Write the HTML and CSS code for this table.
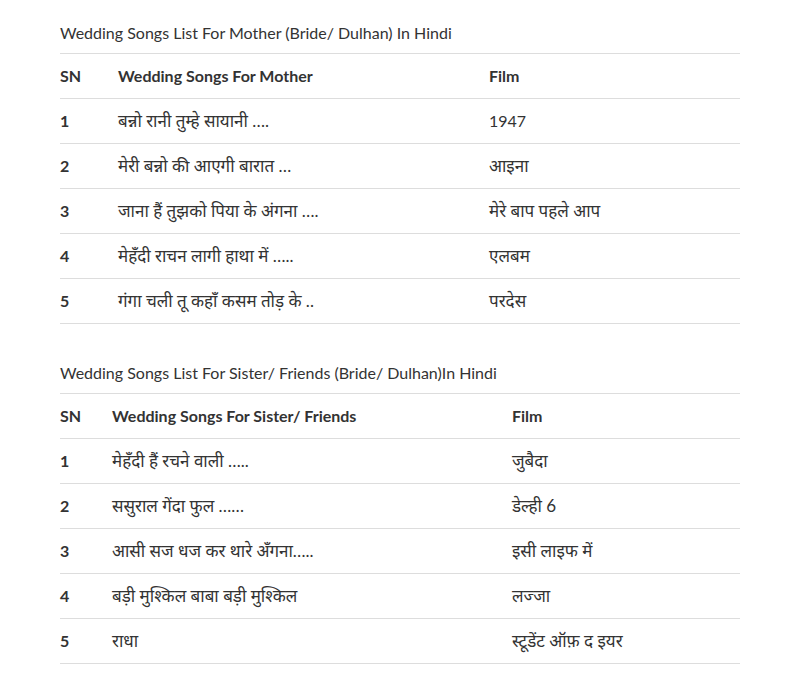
FILE: index.html
```html
<!DOCTYPE html>
<html lang="hi">
<head>
<meta charset="utf-8">
<title>Wedding Songs</title>
<link rel="stylesheet" href="styles.css">
</head>
<body>
<div class="content">
  <table class="songs t1">
    <caption>Wedding Songs List For Mother (Bride/ Dulhan) In Hindi</caption>
    <colgroup><col class="c-sn"><col class="c-song"><col class="c-film"></colgroup>
    <thead>
      <tr><th>SN</th><th>Wedding Songs For Mother</th><th>Film</th></tr>
    </thead>
    <tbody>
      <tr><td class="sn">1</td><td class="hi">बन्नो रानी तुम्हे सायानी ….</td><td>1947</td></tr>
      <tr><td class="sn">2</td><td class="hi">मेरी बन्नो की आएगी बारात …</td><td class="hi">आइना</td></tr>
      <tr><td class="sn">3</td><td class="hi">जाना हैं तुझको पिया के अंगना ….</td><td class="hi">मेरे बाप पहले आप</td></tr>
      <tr><td class="sn">4</td><td class="hi">मेहँदी राचन लागी हाथा में …..</td><td class="hi">एलबम</td></tr>
      <tr><td class="sn">5</td><td class="hi">गंगा चली तू कहाँ कसम तोड़ के ..</td><td class="hi">परदेस</td></tr>
    </tbody>
  </table>

  <table class="songs t2">
    <caption>Wedding Songs List For Sister/ Friends (Bride/ Dulhan)In Hindi</caption>
    <colgroup><col class="c-sn"><col class="c-song"><col class="c-film"></colgroup>
    <thead>
      <tr><th>SN</th><th>Wedding Songs For Sister/ Friends</th><th>Film</th></tr>
    </thead>
    <tbody>
      <tr><td class="sn">1</td><td class="hi">मेहँदी हैं रचने वाली …..</td><td class="hi">जुबैदा</td></tr>
      <tr><td class="sn">2</td><td class="hi">ससुराल गेंदा फुल ……</td><td class="hi">डेल्ही 6</td></tr>
      <tr><td class="sn">3</td><td class="hi">आसी सज धज कर थारे अँगना…..</td><td class="hi">इसी लाइफ में</td></tr>
      <tr><td class="sn">4</td><td class="hi">बड़ी मुश्किल बाबा बड़ी मुश्किल</td><td class="hi">लज्जा</td></tr>
      <tr><td class="sn">5</td><td class="hi">राधा</td><td class="hi">स्टूडेंट ऑफ़ द इयर</td></tr>
    </tbody>
  </table>
</div>
</body>
</html>
```

FILE: styles.css
```css
html, body {
  margin: 0;
  padding: 0;
  background: #ffffff;
}

body {
  font-family: Lato, "Noto Sans", "Liberation Sans", sans-serif;
  font-size: 16px;
  color: #333333;
}

.content {
  width: 680px;
  margin: 0 0 0 60px;
  padding-top: 13px;
}

.songs {
  width: 680px;
  border-collapse: collapse;
  table-layout: fixed;
  margin-bottom: 29px;
}

.songs caption {
  text-align: left;
  height: 40px;
  line-height: 40px;
  padding: 0;
  color: #333333;
}

.songs th,
.songs td {
  height: 44px;
  padding: 0;
  text-align: left;
  vertical-align: middle;
  line-height: 20px;
  border-top: 1px solid #dddddd;
  border-bottom: 1px solid #dddddd;
}

.songs th {
  font-weight: 700;
}

.songs td.sn {
  font-weight: 700;
}

.songs td.hi {
  font-size: 17px;
}

.t1 .c-sn { width: 58px; }
.t1 .c-song { width: 371px; }
.t1 .c-film { width: 251px; }

.t2 .c-sn { width: 52px; }
.t2 .c-song { width: 400px; }
.t2 .c-film { width: 228px; }
```
